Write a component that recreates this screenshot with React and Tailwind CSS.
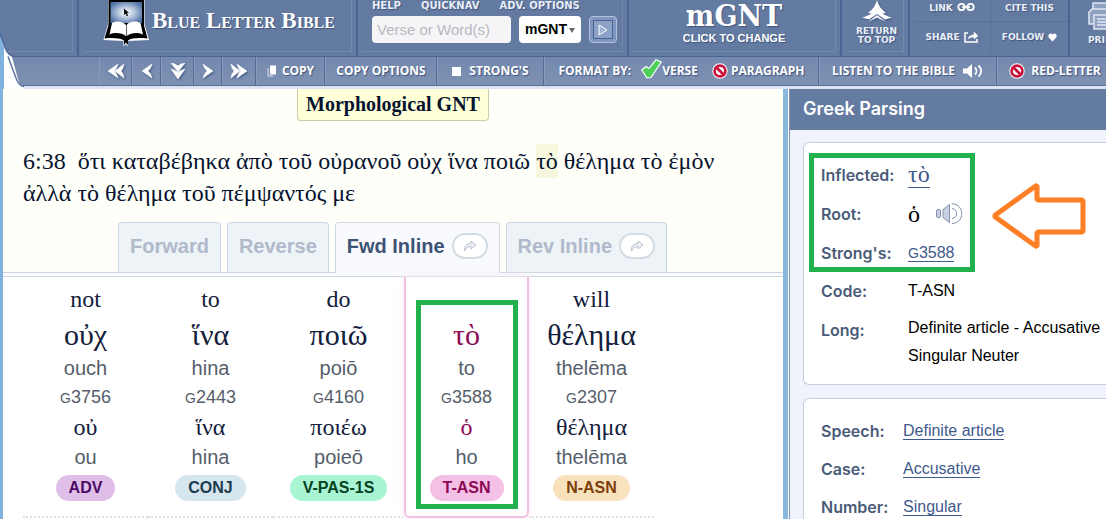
import React from "react";

const serif = "font-['Liberation_Serif',serif]";
const shadow = "[text-shadow:1px_1px_1px_#3d5580]";

function BookLogo() {
  return (
    <svg viewBox="0 0 46 47" className="h-[47px] w-[46px] shrink-0" aria-hidden="true">
      <defs>
        <radialGradient id="screen" cx="50%" cy="50%" r="60%">
          <stop offset="0" stopColor="#fff" />
          <stop offset="0.35" stopColor="#c6d3e6" />
          <stop offset="1" stopColor="#4d6fa3" />
        </radialGradient>
      </defs>
      <path d="M0.500 40L5 24V0H41.500V24L46 40L25 41V46.500L23 44L20.500 46.500V41Z" fill="#fff" />
      <rect x="5.500" y="0" width="35.500" height="25" fill="#000" />
      <rect x="7.500" y="2" width="31.500" height="21" fill="url(#screen)" />
      <path d="M21 8.500V15L22.500 13.700L23.800 16.200L25.200 15.400L24 13L26 12.700Z" fill="#111" />
      <path d="M1.500 38.500L6 23.500H40.500L44.500 38.500C36 37.500 28 38 25 40.500V45L22.800 42.500L21 45V40.500C17 38 9 37.500 1.500 38.500Z" fill="#000" />
      <path d="M9 23C14 20.500 20 21.500 23 25V36C19 33 12 32 6.500 34.500Z" fill="#fff" />
      <path d="M37.500 23C32 20.500 26 21.500 23.600 25V36C28 33 34 32 40 34.500Z" fill="#fff" />
    </svg>
  );
}

function Chevron({ dir, double }) {
  const turn = { left: "", right: "rotate-180", down: "-rotate-90" }[dir];
  return (
    <svg viewBox="0 0 18 16" className="h-4 w-[18px] drop-shadow-[1px_1px_1px_#3d5580]" aria-hidden="true">
      <g className={`origin-center ${turn}`}>
        <path
          d={
            double
              ? "M11 1L1 8L11 15L9.500 11L7.500 8L9.500 5Z M17 1L8 8L17 15L16 11L14 8L16 5Z"
              : "M14 1L4 8L14 15L12.500 11L10 8L12.500 5Z"
          }
          fill="#fff"
          stroke="#fff"
          strokeWidth="0.600"
        />
      </g>
    </svg>
  );
}

function NoSign() {
  return (
    <svg viewBox="0 0 16 16" className="h-4 w-4 shrink-0" aria-hidden="true">
      <circle cx="8" cy="8" r="7.700" fill="#fff" />
      <circle cx="8" cy="8" r="5.400" fill="#fff" stroke="#c8143c" strokeWidth="2.700" />
      <path d="M4 4L12 12" stroke="#c8143c" strokeWidth="2.800" />
    </svg>
  );
}

function Cell({ className = "", children }) {
  return (
    <div className={`shrink-0 border-r-2 border-[#4a6492] pb-1 pr-1 pl-1 ${className}`}>
      <div className="flex h-full w-full border-r border-b border-[#7088af]">{children}</div>
    </div>
  );
}

const toolText = `font-['Open_Sans',sans-serif] text-[12px] leading-4 font-bold whitespace-nowrap text-white ${shadow}`;

function Tool({ className = "", children }) {
  return (
    <button
      type="button"
      className={`flex h-full shrink-0 items-center justify-center border-r border-l border-r-[#536b95] border-l-[#899bbb] ${toolText} ${className}`}
    >
      {children}
    </button>
  );
}

const pixel = `font-['DejaVu_Sans',sans-serif] font-bold text-[#e9eef6] ${shadow}`;
const small = `text-[9px] leading-3 ${pixel}`;

function Header() {
  return (
    <header className="relative h-[57px] shrink-0 overflow-hidden bg-[#647ba1]">
      <div className="flex h-full border-b border-[#4a6492]">
        <Cell className="w-[79px]" />
        <Cell className="w-[279px]">
          <a href="#home" className="flex items-start gap-[3px] pl-5">
            <BookLogo />
            <span className={`pt-[7px] ${serif} text-[23px] leading-7 font-bold whitespace-nowrap text-white [font-variant:small-caps] ${shadow}`}>
              Blue Letter Bible
            </span>
          </a>
        </Cell>
        <Cell className="w-[271px]">
          <div className="w-full pl-[10px]">
            <nav className={`flex h-4 gap-5 text-[10px] leading-3 ${pixel}`}>
              <a href="#help">HELP</a>
              <a href="#quicknav">QUICKNAV</a>
              <a href="#options">ADV. OPTIONS</a>
            </nav>
            <form className="flex gap-2">
              <input
                aria-label="Verse or words"
                placeholder="Verse or Word(s)"
                className="h-[27px] w-[139px] rounded-sm bg-[#f5f5f7] px-[5px] font-['Liberation_Sans',sans-serif] text-[15px] text-black placeholder:text-[#b9b9bf]"
              />
              <span className="relative">
                <select
                  aria-label="Translation"
                  className="h-[27px] w-[62px] appearance-none rounded-sm bg-white pl-[6px] font-['Liberation_Sans',sans-serif] text-[14px] font-bold text-black"
                >
                  <option>mGNT</option>
                </select>
                <svg viewBox="0 0 6 5" className="pointer-events-none absolute top-[12px] right-[6px] h-[5px] w-[6px]" aria-hidden="true">
                  <path d="M0 0H6L3 5Z" fill="#666" />
                </svg>
              </span>
              <button type="button" aria-label="Search" className="flex h-[27px] w-[28px] items-center justify-center rounded-sm border border-[#b3c3de] bg-[#7e96bf]">
                <span className="flex h-[19px] w-[20px] items-center justify-center border border-[#4a6492] bg-[#8ba1c6]">
                  <svg viewBox="0 0 10 12" className="h-3 w-[10px]" aria-hidden="true">
                    <path d="M1 1L9 6L1 11Z" fill="#9fb2d2" stroke="#fff" />
                  </svg>
                </span>
              </button>
            </form>
          </div>
        </Cell>
        <Cell className="w-[213px]">
          <button type="button" className={`flex w-full flex-col items-center text-white ${shadow}`}>
            <span className="font-['DejaVu_Serif_Condensed','DejaVu_Serif',serif] text-[30px] leading-8 font-bold">mGNT</span>
            <span className="font-['Liberation_Sans',sans-serif] text-[11px] leading-3 font-bold">CLICK TO CHANGE</span>
          </button>
        </Cell>
        <Cell className="w-[68px]">
          <a href="#top" className="flex w-full flex-col items-center gap-1 pl-1 text-center">
            <svg viewBox="0 0 30 23" className="h-[23px] w-[30px] shrink-0 drop-shadow-[1px_1px_1px_#3d5580]" aria-hidden="true">
              <path d="M15 0C16 5 19 9 24 13L20.500 13.500C24 15.500 27 17 30 17.500L23 19.500L15 14L7 19.500L0 17.500C3 17 6 15.500 9.500 13.500L6 13C11 9 14 5 15 0Z" fill="#fff" />
              <path d="M6 22L15 15L24 22L15 17.500Z" fill="#fff" />
            </svg>
            <span className={`text-[9px] leading-[9px] ${pixel}`}>RETURN<br />TO TOP</span>
          </a>
        </Cell>
        <div className={`grid w-[160px] shrink-0 grid-cols-2 grid-rows-[22px_30px] border-r-2 border-[#4a6492] pl-1 ${small}`}>
          <a href="#link" className="flex items-start justify-center gap-1 border-r border-b border-[#566e98] pt-[2px]">
            LINK
            <svg viewBox="0 0 18 10" className="h-[10px] w-[18px]" fill="none" stroke="#fff" strokeWidth="1.800" aria-hidden="true">
              <circle cx="4.500" cy="5" r="3.200" /><circle cx="13.500" cy="5" r="3.200" /><path d="M5 5H13" />
            </svg>
          </a>
          <a href="#cite" className="flex items-start justify-center border-b border-[#566e98] pt-[2px]">CITE THIS</a>
          <a href="#share" className="flex items-center justify-center gap-1 border-r border-[#566e98]">
            SHARE
            <svg viewBox="0 0 15 12" className="h-3 w-[15px]" fill="none" stroke="#fff" strokeWidth="1.500" aria-hidden="true">
              <path d="M4 2H1V11H13V8" /><path d="M4 8C5 5 7 4 10 4V1L14 5L10 8V6C7 6 6 6.500 4 8Z" fill="#fff" strokeWidth="0.500" />
            </svg>
          </a>
          <a href="#follow" className="flex items-center justify-center gap-1">
            FOLLOW
            <svg viewBox="0 0 10 9" className="h-[9px] w-[9px]" aria-hidden="true">
              <path d="M5 9L0.800 4.500C-1 1 3.500-1.500 5 1.500C6.500-1.500 11 1 9.200 4.500Z" fill="#fff" />
            </svg>
          </a>
        </div>
        <a href="#print" className={`flex w-[76px] shrink-0 flex-col gap-1 pt-[2px] pl-[18px] ${small}`}>
          <svg viewBox="0 0 30 28" className="h-7 w-[30px]" fill="#8fa2c2" stroke="#dfe6f1" strokeWidth="1.500" aria-hidden="true">
            <path d="M5 7V1H25V7M5 22H1V10L4 7H26L29 10V22H25" /><rect x="6" y="13" width="18" height="14" />
            <path d="M9 17H21M9 20H21M9 23H21" />
          </svg>
          PRINT
        </a>
      </div>
    </header>
  );
}

function Toolbar() {
  return (
    <div className="relative h-[29px] shrink-0 overflow-hidden border-b border-[#566e98] bg-linear-to-b from-[#7389ad] to-[#7e91b3]">
      <div className="flex h-full pl-[99px]">
        <Tool className="w-[33px]"><Chevron dir="left" double /></Tool>
        <Tool className="w-[29px]"><Chevron dir="left" /></Tool>
        <Tool className="w-[33px]"><Chevron dir="down" double /></Tool>
        <Tool className="w-[28px]"><Chevron dir="right" /></Tool>
        <Tool className="w-[34px]"><Chevron dir="right" double /></Tool>
        <Tool className="w-[69px] gap-[5px]">
          <svg viewBox="0 0 10 12" className="h-3 w-[10px]" aria-hidden="true">
            <path d="M1 3V11H6" fill="none" stroke="#dfe6f1" /><rect x="3" y="0.500" width="6" height="9" fill="#fff" />
          </svg>
          COPY
        </Tool>
        <Tool className="w-[112px]">COPY OPTIONS</Tool>
        <Tool className="w-[107px] gap-2"><span className="h-[9px] w-[9px] bg-white" />STRONG'S</Tool>
        <div className="flex w-[275px] shrink-0 items-center justify-center border-r border-l border-r-[#536b95] border-l-[#899bbb]">
          <span className={toolText}>FORMAT BY:</span>
          <button type="button" className={`flex items-center pl-[10px] ${toolText}`}>
            <svg viewBox="0 0 21 20" className="-mt-1 h-5 w-[21px]" aria-hidden="true">
              <path d="M0.700 11L5 7.500L8 9.500L15 0.700L20.300 3L10 18.500L6 19Z" fill="#4fce58" stroke="#fff" strokeWidth="1.200" strokeLinejoin="round" />
            </svg>
            VERSE
          </button>
          <button type="button" className={`flex items-center gap-[3px] pl-[14px] ${toolText}`}>
            <NoSign />PARAGRAPH
          </button>
        </div>
        <Tool className="w-[178px] gap-2">
          LISTEN TO THE BIBLE
          <svg viewBox="0 0 21 14" className="h-[14px] w-[21px]" fill="none" stroke="#fff" strokeWidth="1.800" aria-hidden="true">
            <path d="M0 4.500H4L9 0V14L4 9.500H0Z" fill="#fff" stroke="none" />
            <path d="M12 3.500C14 5.500 14 8.500 12 10.500M15.500 1.500C19 5 19 9 15.500 12.500" />
          </svg>
        </Tool>
        <Tool className="w-[116px] gap-[6px]"><NoSign />RED-LETTER</Tool>
      </div>
    </div>
  );
}

function Tab({ active, share, children }) {
  return (
    <button
      type="button"
      className={`flex items-center gap-[7px] rounded-t-sm border border-b-0 border-[#ced7e1] px-[11px] font-['Liberation_Sans',sans-serif] text-[20px] leading-6 font-bold whitespace-nowrap ${
        active ? "relative -mb-px h-[51px] bg-[#f8fafd] pb-[5px] text-[#3f5375]" : "h-[50px] bg-[#eef3f7] pb-1 text-[#b0bacb]"
      }`}
    >
      {children}
      {share && (
        <span className="flex h-[26px] w-9 items-center justify-center rounded-full border-2 border-[#d3dbe3] bg-white">
          <svg viewBox="0 0 14 12" className="h-3 w-[14px]" fill="#eef2f7" stroke="#b5c0cf" aria-hidden="true">
            <path d="M8 1L13 5L8 9V6.500C5 6.500 3 8 1.500 11C1 6 4 3.500 8 3.500Z" strokeLinejoin="round" />
          </svg>
        </span>
      )}
    </button>
  );
}

const words = [
  { en: "not", gk: "οὐχ", tr: "ouch", n: "3756", root: "οὐ", rtr: "ou", code: "ADV", tone: "bg-[#dfbfe8] text-[#4b0a66]" },
  { en: "to", gk: "ἵνα", tr: "hina", n: "2443", root: "ἵνα", rtr: "hina", code: "CONJ", tone: "bg-[#d5e6ef] text-[#1d3c50]" },
  { en: "do", gk: "ποιῶ", tr: "poiō", n: "4160", root: "ποιέω", rtr: "poieō", code: "V-PAS-1S", tone: "bg-[#a8f4d3] text-[#06431f]" },
  { en: "", gk: "τὸ", tr: "to", n: "3588", root: "ὁ", rtr: "ho", code: "T-ASN", tone: "bg-[#f5c0e6] text-[#8c0a55]", on: true },
  { en: "will", gk: "θέλημα", tr: "thelēma", n: "2307", root: "θέλημα", rtr: "thelēma", code: "N-ASN", tone: "bg-[#f8e2bd] text-[#7c3f0a]" },
];

function Word({ w }) {
  const greek = w.on ? "text-[#8c0a55]" : "text-[#12203c]";
  return (
    <div
      className={`relative flex h-[241px] flex-col items-center pt-2 font-['Liberation_Sans',sans-serif] text-[#555d6b] ${
        w.on ? "rounded-b-md border-2 border-t-0 border-[#f0c0e2] shadow-[0_0_8px_#fbe6f6]" : "border-b-2 border-dotted border-[#e0e0e4]"
      }`}
    >
      <span className={`h-[30px] ${serif} text-[24px] leading-7 text-[#12203c]`}>{w.en}</span>
      <span className={`${serif} text-[30px] leading-10 ${greek}`}>{w.gk}</span>
      <span className="text-[20px] leading-[26px]">{w.tr}</span>
      <a href="#lexicon" className="text-[18px] leading-8"><span className="text-[14px]">G</span>{w.n}</a>
      <span className={`${serif} text-[24px] leading-[26px] ${greek}`}>{w.root}</span>
      <span className="text-[20px] leading-[34px]">{w.rtr}</span>
      <span className={`mt-px h-[26px] rounded-full px-[13px] text-[16px] leading-[26px] font-bold ${w.tone}`}>{w.code}</span>
      {w.on && <span className="absolute bottom-[7px] left-[10px] h-[209px] w-[102px] border-[5px] border-[#22b14c]" />}
    </div>
  );
}

const label = "font-['Inter',sans-serif] text-[16px] font-semibold text-[#4a5b78]";
const link = "border-b border-[#3f5a8c] text-[#3f5a8c]";

function Parsing() {
  return (
    <aside className="flex w-[323px] shrink-0 border-l-[5px] border-[#8ab7de] bg-white pl-px">
      <div className="flex-1 overflow-hidden border-l border-[#8593ae] bg-[#f0f3fb]">
        <h2 className="h-[41px] bg-[#647ba1] pl-[13px] font-['Inter',sans-serif] text-[18px] leading-10 font-semibold text-white">Greek Parsing</h2>
        <div className="flex flex-col gap-[13px] pt-3 pl-[13px] font-['Liberation_Sans',sans-serif] text-[16px] text-black">
          <section className="relative h-[243px] rounded-l-md border border-r-0 border-[#c2cde0] bg-white pl-[17px]">
            <dl className="grid grid-cols-[87px_1fr] grid-rows-[38px_40px_38px_38px_auto] items-center pt-[13px]">
              <dt className={label}>Inflected:</dt>
              <dd><a href="#inflected" className={`${serif} text-[24px] leading-6 ${link}`}>τὸ</a></dd>
              <dt className={label}>Root:</dt>
              <dd className="flex items-center gap-4">
                <span className={`${serif} text-[24px] leading-6`}>ὁ</span>
                <button type="button" aria-label="Listen">
                  <svg viewBox="0 0 27 22" className="h-[22px] w-[27px]" fill="none" stroke="#8290b0" aria-hidden="true">
                    <rect x="0.500" y="6.500" width="4" height="8" rx="1.500" fill="#c8d0e2" />
                    <path d="M7 6.500L13.500 1.500V19.500L7 14.500Z" fill="#c8d0e2" strokeLinejoin="round" />
                    <path d="M16 5.500C22 6 22 15 16 15.500M16 0.800C29 1 29 20.500 16 20.500" />
                  </svg>
                </button>
              </dd>
              <dt className={label}>Strong's:</dt>
              <dd><a href="#strongs" className={`leading-5 ${link}`}><span className="text-[14px]">G</span>3588</a></dd>
              <dt className={label}>Code:</dt>
              <dd>T-ASN</dd>
              <dt className={`self-start leading-10 ${label}`}>Long:</dt>
              <dd className="pt-1 leading-7">Definite article - Accusative<br />Singular Neuter</dd>
            </dl>
            <span className="pointer-events-none absolute top-[10px] left-[5px] h-[119px] w-[166px] border-[5px] border-[#22b14c]" />
            <svg viewBox="0 0 96 70" className="pointer-events-none absolute top-[38px] left-[186px] h-[70px] w-[96px]" aria-hidden="true">
              <path d="M4 35L47 4V19H93V51H47V66Z" fill="#fff" stroke="#ff7f27" strokeWidth="5" strokeLinejoin="bevel" />
            </svg>
          </section>
          <section className="rounded-l-md border border-r-0 border-[#c2cde0] bg-white pt-[13px] pl-[17px]">
            <dl className="grid auto-rows-[38px] grid-cols-[82px_1fr] items-center">
              <dt className={label}>Speech:</dt>
              <dd><a href="#speech" className={link}>Definite article</a></dd>
              <dt className={label}>Case:</dt>
              <dd><a href="#case" className={link}>Accusative</a></dd>
              <dt className={label}>Number:</dt>
              <dd><a href="#number" className={link}>Singular</a></dd>
            </dl>
          </section>
        </div>
      </div>
    </aside>
  );
}

export default function App() {
  return (
    <div className="relative flex h-screen flex-col overflow-hidden bg-white">
      <Header />
      <Toolbar />
      <svg viewBox="0 0 24 56" className="absolute top-[33px] left-0 h-14 w-6" aria-hidden="true">
        <path d="M0 0L7 19Q9 23 12 23V24L18 46Q20 53 24 54V56H0Z" fill="#fff" />
        <path d="M0 0L4 14V56H0Z" fill="#7fb2dd" />
        <path d="M0 0L6 17Q9 23.500 14 23.500" fill="none" stroke="#4a6492" strokeWidth="1.500" />
        <path d="M4 15Q7 22 12 23.500L8 24.500L4 19Z" fill="#fff" />
        <path d="M8 23.500L16 45Q19 53 24 53.500" fill="none" stroke="#5f769f" strokeWidth="1.500" />
      </svg>
      <div className="h-[3px] shrink-0 bg-[#dbe5f2]" />
      <div className="flex min-h-0 flex-1">
        <main className="flex-1 overflow-hidden border-l-[3px] border-[#7fb2dd] bg-[#fffffa]">
          <div className="flex h-[133px] flex-col">
            <h1 className={`h-8 self-center rounded-b-sm border border-t-0 border-[#cfccaa] bg-[#ffffd8] px-2 ${serif} text-[20px] leading-[31px] font-bold whitespace-nowrap text-[#06132f]`}>
              Morphological GNT
            </h1>
            <p className={`max-w-[730px] pt-6 pl-5 ${serif} text-[24px] leading-8 text-[#06132f]`}>
              6:38&nbsp; ὅτι καταβέβηκα ἀπὸ τοῦ οὐρανοῦ οὐχ ἵνα ποιῶ <mark className="bg-[#f6f7dc] py-1 text-inherit">τὸ</mark> θέλημα τὸ ἐμὸν ἀλλὰ τὸ θέλημα τοῦ πέμψαντός με
            </p>
          </div>
          <nav className="flex items-end gap-[6px] border-b border-[#ced7e1] pl-[115px]">
            <Tab>Forward</Tab>
            <Tab>Reverse</Tab>
            <Tab active share>Fwd Inline</Tab>
            <Tab share>Rev Inline</Tab>
          </nav>
          <div className="h-1 border-b border-[#ced7e1] bg-[#f8fafd]" />
          <div className="grid h-full grid-cols-[125px_125px_131px_125px_125px] content-start bg-white pl-5">
            {words.map((w) => <Word key={w.n} w={w} />)}
          </div>
        </main>
        <Parsing />
      </div>
    </div>
  );
}
